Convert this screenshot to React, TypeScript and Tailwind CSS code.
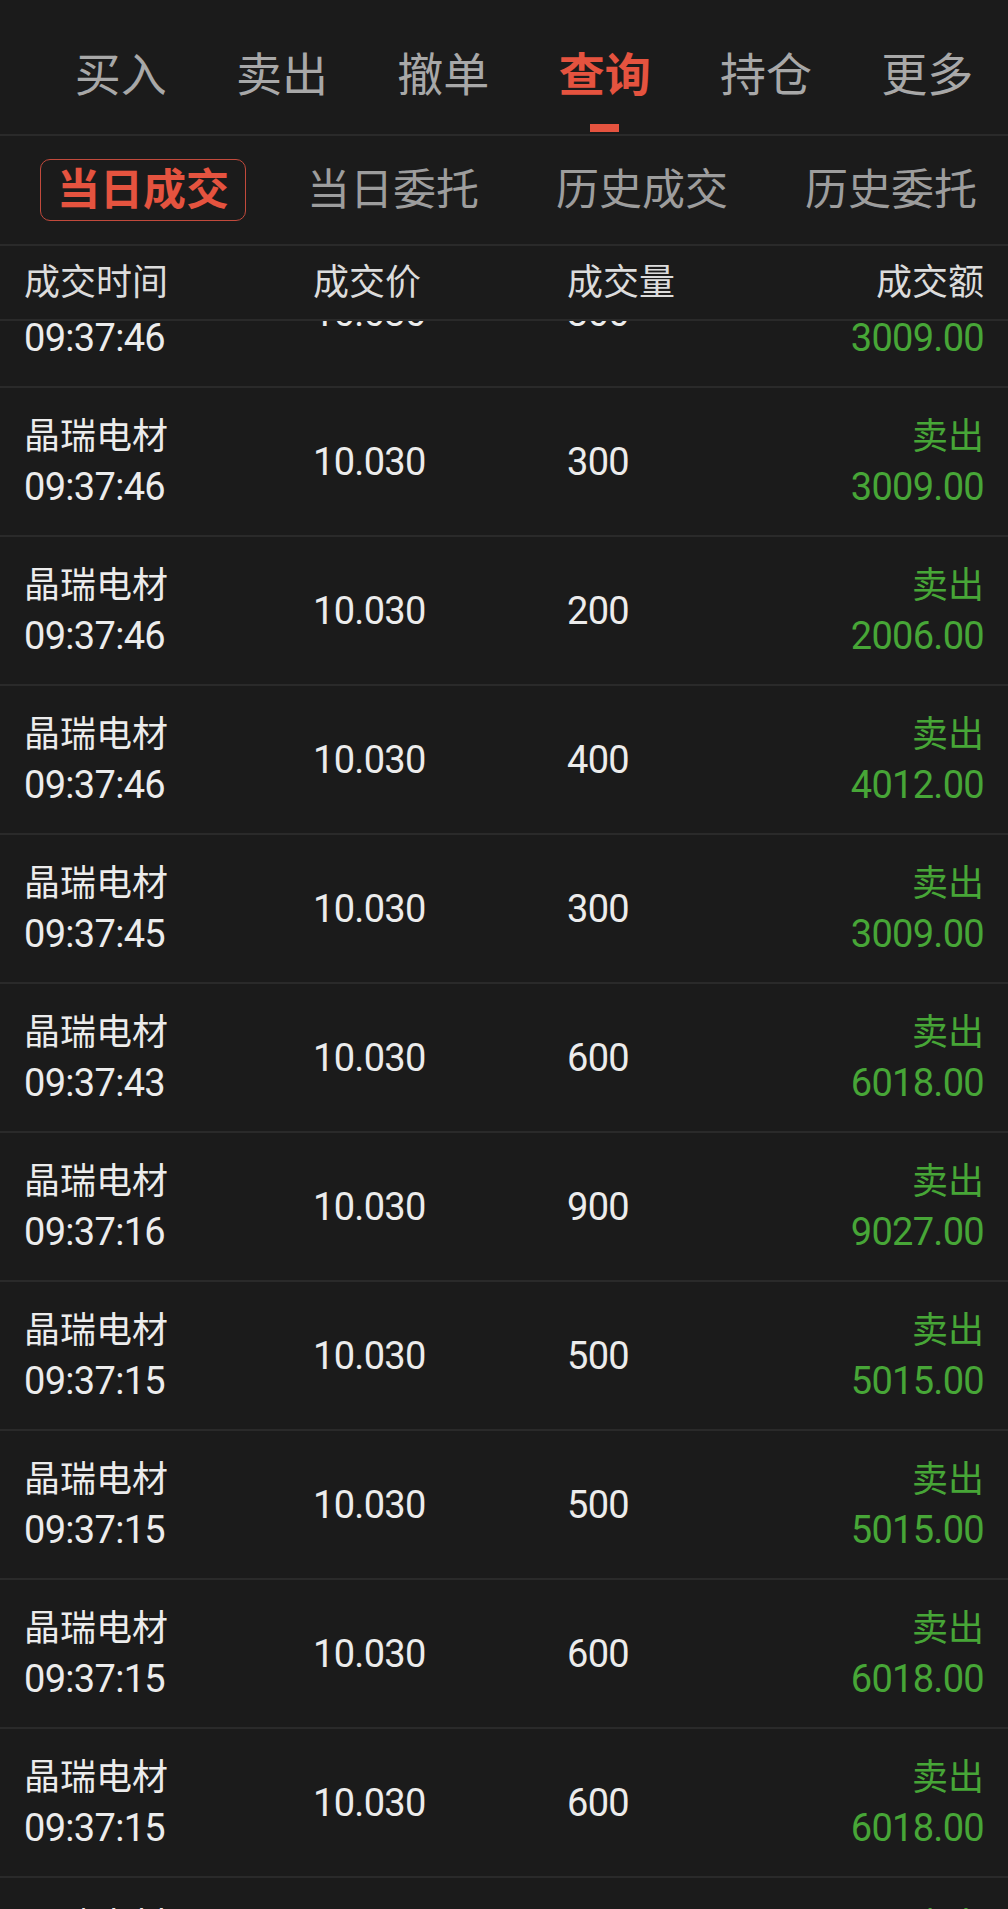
const mainTabs = ['买入', '卖出', '撤单', '查询', '持仓', '更多']
const subTabs = ['当日成交', '当日委托', '历史成交', '历史委托']

type Trade = { name: string; time: string; price: string; qty: string; side: string; amount: string }

const trades: Trade[] = [
  { name: '晶瑞电材', time: '09:37:46', price: '10.030', qty: '300', side: '卖出', amount: '3009.00' },
  { name: '晶瑞电材', time: '09:37:46', price: '10.030', qty: '300', side: '卖出', amount: '3009.00' },
  { name: '晶瑞电材', time: '09:37:46', price: '10.030', qty: '200', side: '卖出', amount: '2006.00' },
  { name: '晶瑞电材', time: '09:37:46', price: '10.030', qty: '400', side: '卖出', amount: '4012.00' },
  { name: '晶瑞电材', time: '09:37:45', price: '10.030', qty: '300', side: '卖出', amount: '3009.00' },
  { name: '晶瑞电材', time: '09:37:43', price: '10.030', qty: '600', side: '卖出', amount: '6018.00' },
  { name: '晶瑞电材', time: '09:37:16', price: '10.030', qty: '900', side: '卖出', amount: '9027.00' },
  { name: '晶瑞电材', time: '09:37:15', price: '10.030', qty: '500', side: '卖出', amount: '5015.00' },
  { name: '晶瑞电材', time: '09:37:15', price: '10.030', qty: '500', side: '卖出', amount: '5015.00' },
  { name: '晶瑞电材', time: '09:37:15', price: '10.030', qty: '600', side: '卖出', amount: '6018.00' },
  { name: '晶瑞电材', time: '09:37:15', price: '10.030', qty: '600', side: '卖出', amount: '6018.00' },
  { name: '晶瑞电材', time: '09:37:15', price: '10.030', qty: '600', side: '卖出', amount: '6018.00' },
]

// digits in the app are a bit taller and narrower than Roboto at the same width
const num = 'text-[38px] tracking-[-0.7px]'

function TradeRow({ t }: { t: Trade }) {
  return (
    <div className="h-[149px] shrink-0 border-b-2 border-[#2a2a2a] flex items-center px-[24px] text-[36px] leading-[50px] text-[#ececec]">
      <div className="w-[289px] flex flex-col">
        <span>{t.name}</span>
        <span className={num}>{t.time}</span>
      </div>
      <div className={'w-[254px] ' + num}>{t.price}</div>
      <div className={'flex-1 ' + num}>{t.qty}</div>
      <div className="flex flex-col items-end text-[#47a637]">
        <span>{t.side}</span>
        <span className={num}>{t.amount}</span>
      </div>
    </div>
  )
}

export default function App() {
  return (
    <div className="h-screen overflow-hidden bg-[#1b1b1b] flex flex-col font-['Roboto','Noto_Sans_CJK_SC',sans-serif]">
      {/* top tabs */}
      <div className="h-[136px] shrink-0 border-b-2 border-[#2a2a2a] grid grid-cols-6 pl-[40px]">
        {mainTabs.map((tab) => {
          const active = tab === '查询'
          return (
            <div key={tab} className="flex flex-col items-center">
              <span
                className={
                  'mt-[48px] text-[46px] leading-[54px] ' +
                  (active ? 'font-bold text-[#e5533f]' : 'text-[#a8a8a8]')
                }
              >
                {tab}
              </span>
              {active && <div className="mt-[22px] h-[8px] w-[29px] bg-[#e5533f]" />}
            </div>
          )
        })}
      </div>

      {/* sub tabs */}
      <div className="h-[110px] shrink-0 border-b-2 border-[#2a2a2a] flex items-center gap-[45px] pl-[40px]">
        {subTabs.map((tab, i) =>
          i === 0 ? (
            <div
              key={tab}
              className="px-[16px] border border-[#c24a3c] rounded-[10px] text-[43px] leading-[60px] font-bold text-[#e5533f]"
            >
              {tab}
            </div>
          ) : (
            <div key={tab} className="px-[16px] text-[43px] leading-[60px] text-[#9d9d9d]">
              {tab}
            </div>
          )
        )}
      </div>

      {/* column header */}
      <div className="h-[75px] shrink-0 border-b-2 border-[#2a2a2a] flex items-center px-[24px] text-[36px] leading-[50px] text-[#dcdcdc]">
        <div className="w-[289px]">成交时间</div>
        <div className="w-[254px]">成交价</div>
        <div className="flex-1">成交量</div>
        <div>成交额</div>
      </div>

      {/* list, scrolled up under the header */}
      <div className="flex-1 overflow-hidden">
        <div className="-mt-[82px] flex flex-col">
          {trades.map((t, i) => (
            <TradeRow key={i} t={t} />
          ))}
        </div>
      </div>
    </div>
  )
}
